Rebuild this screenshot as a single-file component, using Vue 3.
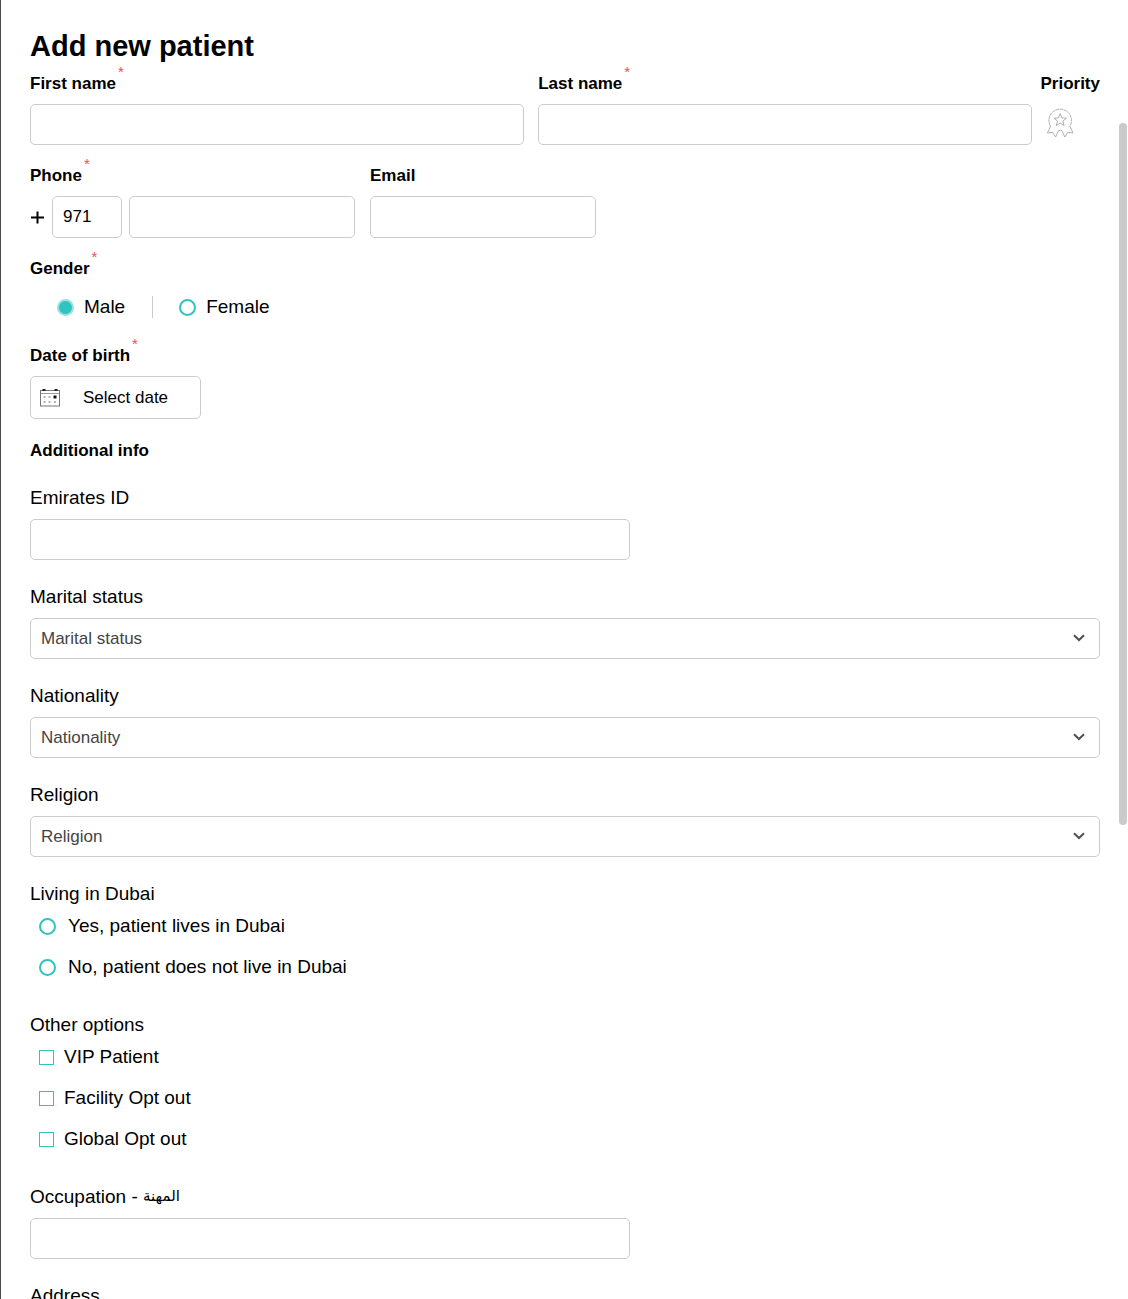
<template>
  <main class="panel">
    <form class="form" @submit.prevent>
      <h1>Add new patient</h1>

      <div class="name-row">
        <div class="names">
          <div class="cell">
            <label class="label" for="first_name">First name<span class="star">*</span></label>
            <input id="first_name" v-model="form.firstName" class="field" type="text" />
          </div>
          <div class="cell">
            <label class="label" for="last_name">Last name<span class="star">*</span></label>
            <input id="last_name" v-model="form.lastName" class="field" type="text" />
          </div>
        </div>
        <div class="priority">
          <span id="priority" class="label">Priority</span>
          <button class="badge" type="button" aria-labelledby="priority" @click="form.priority = !form.priority">
            <svg width="28" height="30" viewBox="0 0 28 30" fill="none" stroke="#a6a6a6" stroke-width="0.9">
              <path d="M4.6 18.4A11.3 11.3 0 1 1 23.8 18.4" stroke-dasharray="3.4 0.5" />
              <path d="M4.6 18L1.4 25L6.6 24.4L9.6 29L12.4 22.8L14.2 22L16 22.8L18.8 29L21.8 24.4L27 25L23.8 18" />
              <path d="M14.2 5.6L15.9 9.9L20.4 10.2L16.9 13.1L18.1 17.6L14.2 15.1L10.3 17.6L11.5 13.1L8 10.2L12.5 9.9Z" />
            </svg>
          </button>
        </div>
      </div>

      <div class="contact-row">
        <div>
          <label class="label" for="phone">Phone<span class="star">*</span></label>
          <div class="phone">
            <svg class="plus" width="13" height="13" viewBox="0 0 13 13" stroke="#000" stroke-width="2">
              <path d="M6.5 0.5V12.5M0 6.5H13" />
            </svg>
            <input v-model="form.code" class="field code" type="text" aria-label="Country code" />
            <input id="phone" v-model="form.phone" class="field medium" type="tel" />
          </div>
        </div>
        <div>
          <label class="label" for="email">Email</label>
          <input id="email" v-model="form.email" class="field medium" type="email" />
        </div>
      </div>

      <div class="gender" role="radiogroup" aria-labelledby="gender">
        <span id="gender" class="label">Gender<span class="star">*</span></span>
        <div class="gender-options">
          <label class="option"><input v-model="form.gender" type="radio" name="gender" value="male" />Male</label>
          <span class="divider"></span>
          <label class="option"><input v-model="form.gender" type="radio" name="gender" value="female" />Female</label>
        </div>
      </div>

      <div class="birth">
        <label class="label" for="birth">Date of birth<span class="star">*</span></label>
        <button id="birth" class="date" type="button">
          <svg width="20" height="18" viewBox="0 0 20 18">
            <rect x="0.5" y="1.5" width="19" height="15.5" fill="none" stroke="#777" />
            <path d="M1 4.5H19" stroke="#999" />
            <path d="M2.5 1H5.5M14.5 1H17.5" stroke="#222" stroke-width="2" />
            <path d="M3.5 8H5.5M8.5 8H10.5M3.5 13H5.5M8.5 13H10.5M14 13H16" stroke="#b5b5b5" stroke-width="2" />
            <path d="M13.5 8H16.5" stroke="#111" stroke-width="3" />
          </svg>
          <span>Select date</span>
        </button>
      </div>

      <h2 class="label">Additional info</h2>

      <div class="group">
        <label class="sub" for="emirates">Emirates ID</label>
        <input id="emirates" v-model="form.emirates" class="field wide" type="text" />
      </div>

      <div v-for="item in selects" :key="item" class="group">
        <label class="sub" :for="item">{{ item }}</label>
        <div class="select">
          <select :id="item" class="field">
            <option>{{ item }}</option>
          </select>
          <svg class="arrow" width="12" height="8" viewBox="0 0 12 8" fill="none" stroke="#505050" stroke-width="2">
            <path d="M1 1.2L6 6L11 1.2" />
          </svg>
        </div>
      </div>

      <div class="group options" role="radiogroup" aria-labelledby="living">
        <span id="living" class="sub">Living in Dubai</span>
        <div class="list">
          <label v-for="item in living" :key="item" class="option">
            <input v-model="form.living" type="radio" name="living" :value="item" />{{ item }}
          </label>
        </div>
      </div>

      <div class="group options" role="group" aria-labelledby="other">
        <span id="other" class="sub">Other options</span>
        <div class="list">
          <label v-for="item in others" :key="item" class="option check">
            <input v-model="form.others" type="checkbox" :value="item" />{{ item }}
          </label>
        </div>
      </div>

      <div class="group">
        <label class="sub" for="occupation">Occupation - <span class="arabic" lang="ar">المهنة</span></label>
        <input id="occupation" v-model="form.occupation" class="field wide" type="text" />
      </div>

      <div class="group">
        <label class="sub" for="address">Address</label>
        <input id="address" v-model="form.address" class="field wide" type="text" />
      </div>
    </form>
    <div class="scrollbar"></div>
  </main>
</template>

<script setup>
import { reactive } from 'vue';

const selects = ['Marital status', 'Nationality', 'Religion'];
const living = ['Yes, patient lives in Dubai', 'No, patient does not live in Dubai'];
const others = ['VIP Patient', 'Facility Opt out', 'Global Opt out'];

const form = reactive({
  firstName: '',
  lastName: '',
  priority: false,
  code: '971',
  phone: '',
  email: '',
  gender: 'male',
  emirates: '',
  living: '',
  others: [],
  occupation: '',
  address: ''
});
</script>

<style>
body {
  margin: 0;
  background: #fff;
}
</style>

<style scoped>
* {
  box-sizing: border-box;
}

.panel {
  position: relative;
  height: 100vh;
  overflow: hidden;
  border-left: 1px solid #4a4a4c;
  font-family: "Liberation Sans", Arial, sans-serif;
  font-size: 19px;
  line-height: 22px;
  color: #000;
}

.form {
  padding: 29px 28px 0 29px;
}

h1 {
  margin: 0 0 11px;
  font-size: 29px;
  line-height: 34px;
}

.label {
  display: flex;
  align-items: flex-start;
  margin: 0 0 10px;
  font-size: 17px;
  font-weight: bold;
  line-height: 20px;
}

.star {
  margin: -7px 0 0 2px;
  color: #e8504f;
  font-size: 15px;
  font-weight: normal;
  line-height: 10px;
}

.field {
  display: block;
  width: 100%;
  height: 41px;
  padding: 0 10px;
  border: 1px solid #ccc;
  border-radius: 5px;
  background: #fff;
  color: #000;
  font-family: inherit;
  font-size: 17px;
}

.name-row {
  display: flex;
  gap: 8px;
  margin-bottom: 21px;
}

.names {
  display: flex;
  flex: 1;
  gap: 14px;
}

.cell {
  flex: 1;
}

.badge {
  display: block;
  margin: 0 0 0 6px;
  padding: 4px 0;
  border: 0;
  background: none;
  cursor: pointer;
}

.badge svg {
  display: block;
}

.contact-row {
  display: flex;
  gap: 15px;
  margin-bottom: 21px;
}

.phone {
  display: flex;
  align-items: center;
}

.plus {
  flex: none;
  margin: 0 8px 0 1px;
}

.code {
  width: 70px;
  margin-right: 7px;
}

.contact-row .field {
  height: 42px;
}

.medium {
  width: 226px;
}

.wide {
  max-width: 600px;
}

.gender {
  margin-bottom: 28px;
}

.gender-options {
  display: flex;
  align-items: center;
  padding: 7px 0 0 27px;
}

.divider {
  width: 1px;
  height: 22px;
  margin: 0 26px 0 27px;
  background: #c8cccc;
}

.option {
  display: flex;
  align-items: center;
}

.option input {
  flex: none;
  width: 17px;
  height: 17px;
  margin: 0 10px 0 0;
  appearance: none;
  border: 2px solid #30c3bf;
  border-radius: 50%;
  background: #fff;
}

.option input[type="radio"]:checked {
  border-color: #98e1df;
  background: #30c3bf;
}

.list {
  display: flex;
  flex-direction: column;
  align-items: flex-start;
  gap: 19px;
  padding-left: 9px;
}

.list .option input {
  margin-right: 12px;
}

.list .check input {
  width: 15px;
  height: 15px;
  margin-right: 10px;
  border-width: 1px;
  border-radius: 0;
}

.list .check input:checked {
  background: #30c3bf;
}

.birth {
  margin-bottom: 22px;
}

.date {
  display: flex;
  align-items: center;
  gap: 23px;
  width: 171px;
  height: 43px;
  padding: 0 9px;
  border: 1px solid #ccc;
  border-radius: 5px;
  background: #fff;
  color: #000;
  font-family: inherit;
  font-size: 17px;
}

h2.label {
  margin-bottom: 26px;
}

.group {
  margin-bottom: 26px;
}

.options {
  margin-bottom: 36px;
}

.sub {
  display: block;
  margin-bottom: 10px;
}

.arabic {
  font-family: "DejaVu Sans", sans-serif;
  font-size: 15px;
  line-height: 0;
  vertical-align: 2px;
}

.select {
  position: relative;
}

.select select {
  appearance: none;
  color: #444;
}

.arrow {
  position: absolute;
  top: 16px;
  right: 15px;
  pointer-events: none;
}

.scrollbar {
  position: absolute;
  top: 123px;
  right: 1px;
  width: 8px;
  height: 702px;
  border-radius: 4px;
  background: #cacaca;
}
</style>
